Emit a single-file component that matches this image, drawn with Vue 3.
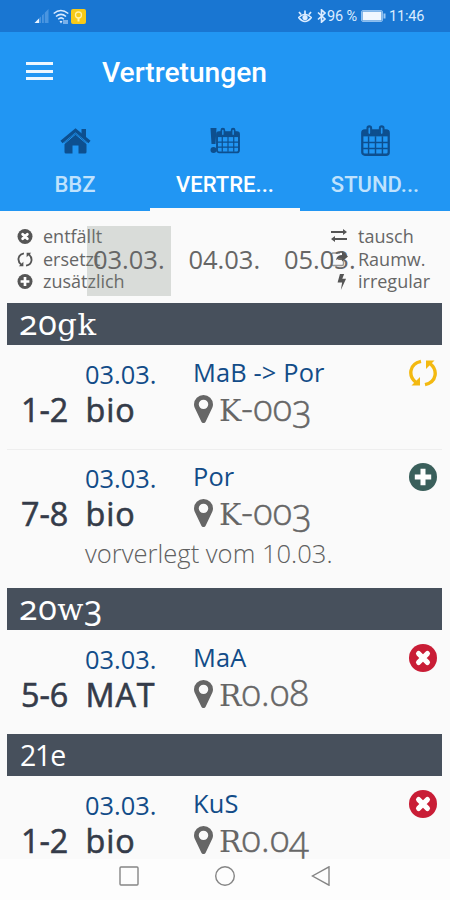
<script setup>
const tabs = [
  { label: 'BBZ', icon: 'home' },
  { label: 'VERTRE...', icon: 'alert', active: true },
  { label: 'STUND...', icon: 'calendar' },
]
const days = ['03.03.', '04.03.', '05.03.']
const groups = [
  {
    name: '20gk',
    rows: [
      { time: '1-2', date: '03.03.', subject: 'bio', teacher: 'MaB -> Por', room: 'K-003', kind: 'swap' },
      { time: '7-8', date: '03.03.', subject: 'bio', teacher: 'Por', room: 'K-003', kind: 'plus', note: 'vorverlegt vom 10.03.' },
    ],
  },
  { name: '20w3', rows: [{ time: '5-6', date: '03.03.', subject: 'MAT', teacher: 'MaA', room: 'R0.08', kind: 'cross' }] },
  { name: '21e', plain: true, rows: [{ time: '1-2', date: '03.03.', subject: 'bio', teacher: 'KuS', room: 'R0.04', kind: 'cross' }] },
]
// Letters are set in a slab serif, figures in old-style numerals.
const runs = (text) => text.match(/[a-zA-Z]+|[^a-zA-Z]+/g).map((t) => ({ t, letters: /[a-zA-Z]/.test(t) }))
</script>

<template>
  <div class="screen">
    <svg class="defs" width="0" height="0">
      <symbol id="swap" viewBox="0 0 28 28">
        <g fill="none" stroke="currentColor" stroke-width="3.4">
          <path d="M12 2.400C0 5 -1 17 7 23.500" />
          <path d="M16 25.600C28 23 29 11 21 4.500" />
        </g>
        <path d="M2.500 26.500h8.500v-8.500z" fill="currentColor" />
        <path d="M25.500 1.500h-8.500v8.500z" fill="currentColor" />
      </symbol>
      <symbol id="plus" viewBox="0 0 28 28">
        <circle cx="14" cy="14" r="14" fill="currentColor" />
        <path d="M14 5.800v16.400M5.800 14h16.400" stroke="#fff" stroke-width="5" />
      </symbol>
      <symbol id="cross" viewBox="0 0 28 28">
        <circle cx="14" cy="14" r="14" fill="currentColor" />
        <path d="M9.600 9.600l8.800 8.800M18.400 9.600l-8.800 8.800" stroke="#fff" stroke-width="5.200" stroke-linecap="round" />
      </symbol>
      <symbol id="pin" viewBox="0 128 1024 1536" preserveAspectRatio="none">
        <path fill="currentColor" d="M768 640q0-106-75-181t-181-75-181 75-75 181 75 181 181 75 181-75 75-181zm256 0q0 109-33 179l-364 774q-16 33-47.500 52t-67.500 19-67.500-19-46.500-52l-365-774q-33-70-33-179 0-212 150-362t362-150 362 150 150 362z" />
      </symbol>
      <symbol id="cal" viewBox="0 0 28 30">
        <rect x="1.200" y="5.200" width="25.600" height="23.600" rx="2.500" fill="none" stroke="currentColor" stroke-width="2.200" />
        <path d="M1 5h26v6H1z" fill="currentColor" />
        <path d="M7.300 11v17M14 11v17M20.700 11v17M2 17h24M2 22.700h24" stroke="currentColor" stroke-width="1.400" />
        <path d="M8 3v5M20 3v5" stroke="currentColor" stroke-width="5.500" stroke-linecap="round" />
        <path d="M8 3.300v4.500M20 3.300v4.500" stroke="#2196f3" stroke-width="1.600" stroke-linecap="round" />
      </symbol>
    </svg>

    <div class="status">
      <svg class="signal" viewBox="0 0 15 15">
        <path d="M0 15h5v-5z" fill="#e8f3ff" />
        <path d="M5 15V10l2-2v7zM8 15V7l2-2v10zM11 15V4l4-4v15z" fill="#4a95e0" />
      </svg>
      <svg class="wifi" viewBox="0 0 16 15" fill="none" stroke="#d9eaff" stroke-width="1.500">
        <path d="M.7 4.500q7-6 14.600 0M3 7.500q5-4.300 10 0M5.200 10.200q3-2.700 5.600 0" />
        <path d="M7 12l1 1.500 1-1.500M10 12h5M10 14h5" stroke-width="1.200" />
      </svg>
      <svg class="app" viewBox="0 0 15 15">
        <rect width="15" height="15" rx="2" fill="#f7ca18" />
        <circle cx="7.500" cy="6" r="3" fill="none" stroke="#fff0a5" stroke-width="1.300" />
        <path d="M7.500 8.500v4" stroke="#fff0a5" stroke-width="2" />
      </svg>
      <span class="grow"></span>
      <svg class="eye" viewBox="0 0 14 13" fill="none" stroke="#dcecff" stroke-width="1.700">
        <path d="M.7 7.500q6.300-6.500 12.600 0q-6.300 8-12.600 0zM3 4.500L1 2M7 4V.5M11 4.500L13 2" />
        <circle cx="7" cy="7.600" r="1.800" fill="#dcecff" />
      </svg>
      <svg class="bt" viewBox="0 0 9 14" fill="none" stroke="#dcecff" stroke-width="1.600">
        <path d="M1 3.500l7 6.500-3.500 3.200V.8L8 4 1 10.500" />
      </svg>
      <span class="pct">96 %</span>
      <svg class="battery" viewBox="0 0 25 12">
        <rect x=".5" y=".5" width="21" height="11" rx="1.500" fill="none" stroke="#8dbff0" />
        <rect x="1.500" y="1.500" width="19" height="9" fill="#f0f7ff" />
        <path d="M23.500 3.500v5" stroke="#9dc8f3" stroke-width="2" />
      </svg>
      <span class="clock">11:46</span>
    </div>

    <header class="toolbar">
      <div class="burger"><i></i><i></i><i></i></div>
      <h1>Vertretungen</h1>
    </header>

    <nav class="tabs">
      <div v-for="t in tabs" :key="t.label" class="tab" :class="{ active: t.active }">
        <div class="tab-icon">
          <svg v-if="t.icon === 'home'" width="31" height="26" viewBox="0 0 31 26">
            <path d="M15.500 5L4.500 14.500v9.500q0 1.500 1.500 1.500h6.500v-8h6v8H25q1.500 0 1.500-1.500v-9.500z" fill="currentColor" />
            <path d="M15.500 6.200L4 16" stroke="#2196f3" stroke-width="1" /><path d="M15.500 6.200L27 16" stroke="#2196f3" stroke-width="1" />
            <path d="M1.500 14L15.500 2.300L29.500 14" fill="none" stroke="currentColor" stroke-width="3.300" />
            <path d="M21.500 1h4.500v9.500L21.500 7z" fill="currentColor" />
          </svg>
          <template v-else-if="t.icon === 'alert'">
            <svg class="bang" width="7" height="27" viewBox="0 0 7 27">
              <path d="M.5 1h6l-1 16h-4z" fill="currentColor" /><circle cx="3.500" cy="23" r="3" fill="currentColor" />
            </svg>
            <svg class="small-cal" width="24" height="27"><use href="#cal" /></svg>
          </template>
          <svg v-else width="29" height="31"><use href="#cal" /></svg>
        </div>
        <span class="tab-label">{{ t.label }}</span>
      </div>
    </nav>

    <section class="filter">
      <ul class="legend">
        <li><svg class="lg"><use href="#cross" /></svg>entfällt</li>
        <li><svg class="lg"><use href="#swap" /></svg>ersetzt</li>
        <li><svg class="lg"><use href="#plus" /></svg>zusätzlich</li>
      </ul>
      <div class="days">
        <span v-for="(d, i) in days" :key="d" class="day" :class="{ selected: i === 0 }">{{ d }}</span>
      </div>
      <ul class="legend right">
        <li>
          <svg class="lg" viewBox="0 0 18 16"><path d="M1 4h13M4 11h13" stroke="currentColor" stroke-width="1.900" /><path d="M13 1l4 3-4 3zM5 8l-4 3 4 3z" fill="currentColor" /></svg>tausch
        </li>
        <li>
          <svg class="lg" viewBox="0 0 18 16"><path d="M10 2H3Q1.500 2 1.500 3.500V13q0 1.500 1.500 1.500h9q1.500 0 1.500-1.500v-3" fill="none" stroke="currentColor" stroke-width="1.400" opacity=".6" /><path d="M6 9q1-5 6-5V0l6 5.500-6 5V7q-3 0-6 2z" fill="currentColor" /></svg>Raumw.
        </li>
        <li>
          <svg class="lg" viewBox="0 0 18 17"><path d="M10 0h4.500l-2 5h4L11 17l1.300-8H7.500z" fill="currentColor" /></svg>irregular
        </li>
      </ul>
    </section>

    <main class="list">
      <section v-for="g in groups" :key="g.name" class="group">
        <h2 v-if="g.plain" class="plain">{{ g.name }}</h2>
        <h2 v-else><span v-for="(r, i) in runs(g.name)" :key="i" :class="r.letters ? 'slab' : 'fig'">{{ r.t }}</span></h2>
        <article v-for="(r, i) in g.rows" :key="i" class="row">
          <div class="time">{{ r.time }}</div>
          <div class="lesson">
            <div class="date">{{ r.date }}</div>
            <div class="subject">{{ r.subject }}</div>
          </div>
          <div class="place">
            <div class="teacher">{{ r.teacher }}</div>
            <div class="room">
              <svg class="pin"><use href="#pin" /></svg>
              <span class="room-name"><span v-for="(p, j) in runs(r.room)" :key="j" :class="p.letters ? 'slab' : 'fig'">{{ p.t }}</span></span>
            </div>
          </div>
          <svg class="kind" :class="r.kind"><use :href="'#' + r.kind" /></svg>
          <div v-if="r.note" class="note">{{ r.note }}</div>
        </article>
      </section>
    </main>

    <footer class="sysnav">
      <svg viewBox="0 0 20 20"><rect x="1" y="1" width="18" height="18" rx="1" /></svg>
      <svg viewBox="0 0 20 20"><circle cx="10" cy="10" r="9.300" /></svg>
      <svg viewBox="0 0 20 20"><path d="M18 .8v18.400L1.500 10z" /></svg>
    </footer>
  </div>
</template>

<style>
body { margin: 0; }
</style>

<style scoped>
.screen {
  width: 450px;
  height: 900px;
  overflow: hidden;
  display: flex;
  flex-direction: column;
  background: #fafafa;
  font-family: "Open Sans", "Noto Sans", sans-serif;
}
.defs { position: absolute; }
.status {
  height: 32px;
  flex: none;
  box-sizing: border-box;
  padding: 0 26px 0 34px;
  display: flex;
  align-items: center;
  background: #1976d2;
  color: #dcecff;
  font: 14.5px/32px Roboto, sans-serif;
}
.signal { width: 15px; height: 14px; margin-right: 4px; }
.wifi { width: 16px; height: 15px; margin-right: 2px; }
.app { width: 15px; height: 15px; }
.grow { flex: 1; }
.eye { width: 14px; height: 13px; margin-right: 5px; }
.bt { width: 9px; height: 14px; margin-right: 1px; }
.pct { width: 34px; padding-top: 1px; white-space: nowrap; letter-spacing: -0.1px; }
.battery { width: 25px; height: 12px; margin-right: 3px; }
.clock { width: 35px; padding-top: 1px; white-space: nowrap; letter-spacing: -0.2px; }
.toolbar {
  height: 80px;
  flex: none;
  display: flex;
  align-items: center;
  background: #2196f3;
  padding-left: 26px;
}
.burger { width: 27px; margin: 0 49px 2px 0; display: grid; gap: 4.5px; }
.burger i { height: 3px; background: #edf7ff; }
h1 { margin: 2px 0 0; color: #fff; font: 500 28.2px/40px Roboto, sans-serif; }
.tabs { height: 99px; flex: none; display: grid; grid-template-columns: repeat(3, 1fr); background: #2196f3; }
.tab {
  box-sizing: border-box;
  height: 99px;
  padding-top: 12px;
  display: flex;
  flex-direction: column;
  align-items: center;
  color: #bfe2fd;
  border-bottom: 3px solid transparent;
}
.tab.active { color: #fff; border-bottom-color: #fafafa; }
.tab-icon { height: 33px; display: flex; align-items: center; color: #0d4f8f; }
.bang { margin-right: -1px; }
.tab-label { margin-top: 13px; font: 500 22px/30px Roboto, sans-serif; }
.filter {
  height: 92px;
  flex: none;
  box-sizing: border-box;
  padding: 14px 0 0 17px;
  display: grid;
  grid-template-columns: 70px 243px 1fr;
  align-items: start;
}
.legend { margin: 0; padding: 0; list-style: none; color: #666; font-size: 18px; line-height: 23px; width: 112px; }
.legend li { display: flex; align-items: center; height: 22.700px; white-space: nowrap; }
.legend .lg { width: 16px; height: 15px; margin-right: 10px; color: #555; }
.legend.right .lg { width: 18px; height: 16px; }
.days { display: flex; gap: 12px; padding-top: 1px; }
.day {
  width: 83.500px;
  height: 70px;
  line-height: 66px;
  flex: none;
  text-align: center;
  font-size: 25.500px;
  color: #666;
}
.selected { background: rgba(120, 130, 120, 0.25); }
.list { flex: 1; min-height: 0; padding: 0 8px 0 7px; }
h2 {
  margin: 0;
  height: 42px;
  background: #47505c;
  color: #fff;
  padding-left: 12px;
  font-weight: 400;
  font-size: 34px;
  line-height: 39px;
  white-space: nowrap;
  letter-spacing: 0.600px;
}
h2.plain { font-size: 28.500px; line-height: 42px; padding-left: 13px; letter-spacing: -1.200px; }
.fig { font-family: "Open Sans", sans-serif; font-variant-numeric: oldstyle-nums; }
.slab { font-family: "DejaVu Serif", serif; font-size: 0.9em; line-height: 1; }
.row {
  box-sizing: border-box;
  height: 104px;
  padding: 12px 0 0 14px;
  display: grid;
  grid-template-columns: 64px 108px 1fr 33px;
  grid-template-rows: 70px auto;
}
.row + .row { height: 139px; border-top: 1px solid #eee; padding-top: 11px; }
.group:first-child .row:first-child { height: 104px; }
.time { padding-top: 34px; }
.time, .subject {
  font-size: 32.300px;
  line-height: 36px;
  color: #343b49;
  -webkit-text-stroke: 0.600px #343b49;
}
.subject { letter-spacing: 0.900px; padding-left: 0.500px; }
.date, .teacher { font-size: 25.400px; line-height: 34px; color: #124c88; }
.teacher { line-height: 31px; white-space: nowrap; letter-spacing: 0.150px; }
.room { padding-left: 1px; }
.room { display: flex; align-items: center; height: 42px; color: #666; font-size: 36px; line-height: 38px; }
.room .slab { font-size: 0.83em; }
.room .fig { font-weight: 300; -webkit-text-stroke: 0.500px #666; letter-spacing: 0.300px; }
.pin { width: 19px; height: 28px; margin-right: 6px; flex: none; }
.room-name { white-space: nowrap; margin-top: -2px; }
.kind { width: 28px; height: 28px; margin-top: 2px; }
.swap.kind { color: #f3b911; }
.plus.kind { color: #3a5f5b; }
.cross.kind { color: #c91d36; }
.note { grid-column: 2 / -1; padding-top: 7px; font-size: 25.600px; line-height: 32px; font-weight: 300; color: #606060; }
.sysnav {
  height: 41px;
  flex: none;
  box-sizing: border-box;
  padding: 7px 0 0 119px;
  display: flex;
  gap: 76px;
  background: #fdfdfd;
}
.sysnav svg { width: 20px; height: 20px; fill: none; stroke: #858585; stroke-width: 1.400; }
</style>
